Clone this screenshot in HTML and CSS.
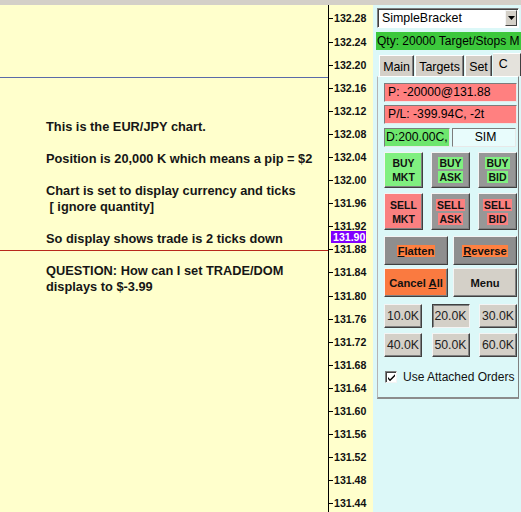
FILE: index.html
```html
<!DOCTYPE html>
<html lang="en">
<head>
   <meta charset="UTF-8">
   <meta name="viewport" content="width=device-width, initial-scale=1.0">
   <title>EUR/JPY Chart Trader</title>
   <link rel="stylesheet" href="styles.css">
</head>
<body>
   <div class="title-strip"></div>

   <div class="workspace">
       <!-- chart area with the two position lines and the note -->
       <div class="chart">
           <div class="chart-line chart-line-avg"></div>
           <div class="chart-line chart-line-entry"></div>
           <div class="chart-note">This is the EUR/JPY chart.

Position is 20,000 K which means a pip = $2

Chart is set to display currency and ticks
 [ ignore quantity]

So display shows trade is 2 ticks down

QUESTION: How can I set TRADE/DOM
displays to $-3.99</div>
       </div>

       <!-- price scale -->
       <div class="price-axis">
           <div class="price">132.28</div>
           <div class="price">132.24</div>
           <div class="price">132.20</div>
           <div class="price">132.16</div>
           <div class="price">132.12</div>
           <div class="price">132.08</div>
           <div class="price">132.04</div>
           <div class="price">132.00</div>
           <div class="price">131.96</div>
           <div class="price">131.92</div>
           <div class="price">131.88</div>
           <div class="price">131.84</div>
           <div class="price">131.80</div>
           <div class="price">131.76</div>
           <div class="price">131.72</div>
           <div class="price">131.68</div>
           <div class="price">131.64</div>
           <div class="price">131.60</div>
           <div class="price">131.56</div>
           <div class="price">131.52</div>
           <div class="price">131.48</div>
           <div class="price">131.44</div>
           <div class="last-price">131.90</div>
       </div>

       <!-- chart trader panel -->
       <div class="trader">
           <div class="strategy-select">
               <span class="strategy-name">SimpleBracket</span>
               <span class="select-arrow">
                   <svg width="7" height="4" viewBox="0 0 7 4"><path d="M0 0h7L3.5 4z" fill="#000"/></svg>
               </span>
           </div>
           <div class="qty-bar">Qty: 20000 Target/Stops M</div>

           <div class="tabs">
               <div class="tab tab-main">Main</div>
               <div class="tab tab-targets">Targets</div>
               <div class="tab tab-set">Set</div>
               <div class="tab tab-active">C</div>
           </div>

           <div class="tab-body">
               <div class="field field-loss">P: -20000@131.88</div>
               <div class="field field-loss">P/L: -399.94C, -2t</div>
               <div class="field-row">
                   <div class="field field-gain">D:200.00C,</div>
                   <div class="field field-account">SIM</div>
               </div>

               <div class="order-grid">
                   <button class="btn btn-buy">BUY<br>MKT</button>
                   <button class="btn btn-gray"><span class="hl hl-buy">BUY</span><br><span class="hl hl-buy">ASK</span></button>
                   <button class="btn btn-gray"><span class="hl hl-buy">BUY</span><br><span class="hl hl-buy">BID</span></button>
                   <button class="btn btn-sell">SELL<br>MKT</button>
                   <button class="btn btn-gray"><span class="hl hl-sell">SELL</span><br><span class="hl hl-sell">ASK</span></button>
                   <button class="btn btn-gray"><span class="hl hl-sell">SELL</span><br><span class="hl hl-sell">BID</span></button>
               </div>

               <div class="action-grid">
                   <button class="btn btn-action btn-dark"><span class="hl hl-orange"><u>F</u>latten</span></button>
                   <button class="btn btn-action btn-dark"><span class="hl hl-orange"><u>R</u>everse</span></button>
                   <button class="btn btn-action btn-orange">Cancel <u>A</u>ll</button>
                   <button class="btn btn-action btn-face">Menu</button>
               </div>

               <div class="size-grid">
                   <button class="btn btn-size">10.0K</button>
                   <button class="btn btn-size btn-pressed">20.0K</button>
                   <button class="btn btn-size">30.0K</button>
                   <button class="btn btn-size">40.0K</button>
                   <button class="btn btn-size">50.0K</button>
                   <button class="btn btn-size">60.0K</button>
               </div>

               <label class="check-row">
                   <span class="check-box">
                       <svg width="9" height="9" viewBox="0 0 9 9"><path d="M1 4l2 2.2L8 1.2v2L3 8.2 1 6z" fill="#000"/></svg>
                   </span>
                   Use Attached Orders
               </label>
           </div>
       </div>
   </div>
</body>
</html>
```

FILE: styles.css
```css
* {
    box-sizing: border-box;
}

body {
    margin: 0;
    width: 521px;
    height: 512px;
    overflow: hidden;
    font-family: "Liberation Sans", Arial, sans-serif;
    background: #ffffcc;
}

.title-strip {
    height: 5px;
    background: #d4d0c8;
}

.workspace {
    display: flex;
    height: 507px;
}

/* chart */
.chart {
    position: relative;
    width: 328px;
    background: #ffffcc;
}

.chart-line {
    position: absolute;
    left: 0;
    right: 0;
    height: 1px;
}

.chart-line-avg {
    top: 72px;
    background: #5a6aa8;
}

.chart-line-entry {
    top: 245px;
    background: #b8281c;
}

.chart-note {
    padding: 114px 0 0 46px;
    white-space: pre;
    font-size: 12.8px;
    font-weight: bold;
    line-height: 16px;
    color: #161616;
}

/* price scale */
.price-axis {
    position: relative;
    width: 45px;
    padding-top: 2.45px;
    border-left: 1px solid #000;
    background: #ffffcc;
}

.price {
    position: relative;
    height: 23.1px;
    line-height: 23.1px;
    padding-left: 5px;
    font-size: 10.6px;
    font-weight: bold;
    color: #111;
}

.price::before {
    content: "";
    position: absolute;
    left: 0;
    top: 11px;
    width: 4px;
    height: 1px;
    background: #000;
}

.last-price {
    position: absolute;
    left: 2px;
    top: 226px;
    width: 35px;
    height: 12px;
    padding-left: 2px;
    line-height: 12px;
    font-size: 10.6px;
    font-weight: bold;
    color: #fff;
    background: #8000ff;
}

/* trader panel */
.trader {
    flex: 1;
    padding: 3px 0 0 4px;
    background: #dcf8f8;
    overflow: hidden;
}

.strategy-select {
    display: flex;
    align-items: center;
    justify-content: space-between;
    width: 142px;
    height: 20px;
    padding: 0 1px 0 2px;
    background: #fff;
    border: 1px solid;
    border-color: #808080 #fff #fff #808080;
    box-shadow: inset 1px 1px 0 #404040;
}

.strategy-name {
    padding-left: 2px;
    font-size: 12.4px;
}

.select-arrow {
    display: flex;
    align-items: center;
    justify-content: center;
    width: 12px;
    height: 16px;
    background: #d4d0c8;
    border: 1px solid;
    border-color: #f4f4f4 #404040 #404040 #f4f4f4;
}

.qty-bar {
    width: 150px;
    height: 18px;
    margin: 4px 0 0 -1px;
    padding-left: 1px;
    line-height: 18px;
    font-size: 12px;
    white-space: nowrap;
    background: #3cc83c;
}

.tabs {
    display: flex;
    gap: 1px;
    height: 21px;
    margin-top: 5px;
    padding-left: 2px;
}

.tab {
    height: 21px;
    padding-top: 4px;
    font-size: 12.4px;
    text-align: center;
    background: #d4d0c8;
    border-top: 1px solid #fff;
    border-left: 1px solid #fff;
    border-right: 1px solid #404040;
    box-shadow: inset -1px 0 0 #808080;
}

.tab-main {
    width: 38px;
}

.tab-targets {
    width: 53px;
}

.tab-set {
    width: 29px;
}

.tab-active {
    width: 30px;
    height: 23px;
    margin-top: -2px;
    padding: 3px 0 0 6px;
    text-align: left;
    background: #e4e2dc;
    border-left: none;
    box-shadow: none;
}

.tab-body {
    width: 142px;
    height: 323px;
    padding: 6px 1px 0 6px;
    border-top: 1px solid #fff;
    border-left: 1px solid #b4b4b4;
    border-right: 1px solid #808080;
    border-bottom: 2px solid #8c8c8c;
}

.field {
    height: 19px;
    padding-left: 3px;
    line-height: 17px;
    font-size: 12.2px;
    white-space: nowrap;
    border: 1px solid;
    border-color: #7c7c7c #e8e8e8 #e8e8e8 #7c7c7c;
}

.field + .field {
    margin-top: 3px;
}

.field-loss {
    background: #ff8080;
}

.field-row {
    display: flex;
    gap: 2px;
    margin-top: 4px;
}

.field-row .field {
    margin-top: 0;
}

.field-gain {
    width: 66px;
    padding-left: 1px;
    background: #6ee66e;
}

.field-account {
    width: 64px;
    text-align: center;
    background: #e8fcfc;
}

/* buttons */
.btn {
    padding: 0;
    font-family: inherit;
    font-weight: bold;
    font-size: 10.5px;
    line-height: 14px;
    color: #111;
    border: 1px solid;
    border-color: #f4f4f4 #404040 #404040 #f4f4f4;
    box-shadow: inset -1px -1px 0 #808080;
}

.btn-buy {
    background: #80f080;
}

.btn-sell {
    background: #fa8080;
}

.btn-gray {
    background: #979797;
}

.hl {
    padding: 0 1px;
}

.hl-buy {
    background: #80f080;
}

.hl-sell {
    background: #fa8080;
}

.hl-orange {
    background: #ff8040;
}

.order-grid {
    display: grid;
    grid-template-columns: repeat(3, 39px);
    grid-template-rows: 36px 37px;
    justify-content: space-between;
    row-gap: 5px;
    margin-top: 5px;
}

.action-grid {
    display: grid;
    grid-template-columns: 64px 64px;
    grid-template-rows: 29px 29px;
    justify-content: space-between;
    row-gap: 3px;
    margin-top: 6px;
}

.btn-action {
    font-size: 11.2px;
}

.btn-dark {
    background: #8e8e8e;
}

.btn-orange {
    background: #fa7a40;
}

.btn-face {
    background: #d4d0c8;
}

.size-grid {
    display: grid;
    grid-template-columns: repeat(3, 38px);
    grid-template-rows: 24px 24px;
    justify-content: space-between;
    row-gap: 5px;
    margin-top: 7px;
}

.btn-size {
    font-weight: normal;
    font-size: 12.3px;
    color: #222;
    background: #d4d0c8;
}

.btn-pressed {
    border-color: #404040 #f4f4f4 #f4f4f4 #404040;
    box-shadow: inset 1px 1px 0 #808080;
}

.check-row {
    display: flex;
    align-items: center;
    gap: 6px;
    height: 18px;
    margin-top: 11px;
    padding-left: 1px;
    font-size: 12px;
    color: #111;
}

.check-box {
    display: flex;
    align-items: center;
    justify-content: center;
    width: 12px;
    height: 12px;
    background: #fff;
    border: 1px solid;
    border-color: #808080 #f4f4f4 #f4f4f4 #808080;
    box-shadow: inset 1px 1px 0 #404040;
}
```
